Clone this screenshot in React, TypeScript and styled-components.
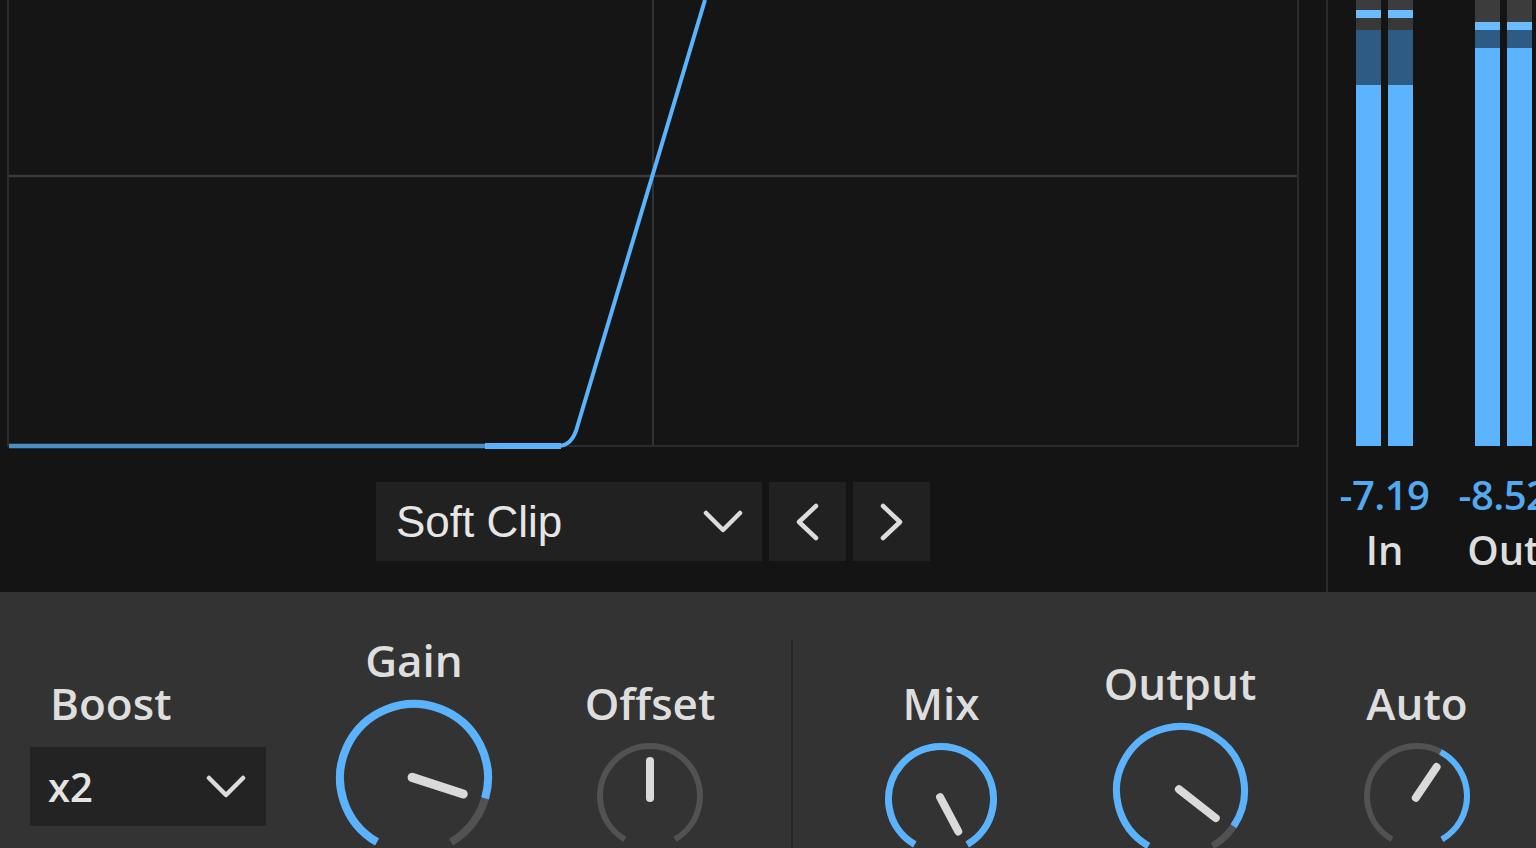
import React from "react";
import styled, { createGlobalStyle } from "styled-components";

const GlobalStyle = createGlobalStyle`
  html, body {
    margin: 0;
    padding: 0;
    background: #141414;
    overflow: hidden;
  }
  * { box-sizing: border-box; }
`;

const BLUE = "#5ab3fc";
const TRACK = "#525252";
const LABEL = "#dedede";

const Page = styled.div`
  width: 1536px;
  height: 848px;
  display: flex;
  flex-direction: column;
  overflow: hidden;
  font-family: "Open Sans", "Noto Sans", sans-serif;
  font-weight: 600;
`;

const TopSection = styled.div`
  height: 592px;
  flex: none;
  display: flex;
  background: #141414;
`;

const GraphArea = styled.div`
  width: 1326px;
  flex: none;
  padding-left: 7px;
  display: flex;
  flex-direction: column;
`;

const GraphBox = styled.div`
  width: 1292px;
  height: 447px;
  border: 2px solid #2c2c2c;
  border-top: none;
  background: #151515;
`;

const GraphSvg = styled.svg`
  display: block;
  overflow: visible;
`;

const PresetRow = styled.div`
  width: 1292px;
  margin-top: 35px;
  display: flex;
  justify-content: center;
  gap: 7px;
`;

const PresetSelect = styled.div`
  width: 386px;
  height: 79px;
  background: #212121;
  display: flex;
  align-items: center;
  justify-content: space-between;
  padding: 0 19px 0 20px;
  font-family: "Liberation Sans", Arial, sans-serif;
  font-weight: 400;
  font-size: 44px;
  color: #e6e6e6;
`;

const NavButton = styled.div`
  width: 77px;
  height: 79px;
  background: #212121;
  display: flex;
  align-items: center;
  justify-content: center;
`;

const MeterArea = styled.div`
  flex: 1;
  border-left: 2px solid #2b2b2b;
  padding-left: 28px;
  display: flex;
  gap: 62px;
`;

const MeterGroup = styled.div`
  width: 57px;
  flex: none;
  display: flex;
  flex-direction: column;
  align-items: center;
`;

const Bars = styled.div`
  height: 446px;
  display: flex;
  gap: 7px;
`;

const Bar = styled.div`
  width: 25px;
  display: flex;
  flex-direction: column;
`;

const Segment = styled.div<{ $h: number; $c: string }>`
  height: ${(p) => p.$h}px;
  flex: none;
  background: ${(p) => p.$c};
`;

const MeterValue = styled.div`
  margin-top: 25px;
  font-size: 40px;
  line-height: 48px;
  color: #52a9ee;
  white-space: nowrap;
  letter-spacing: -0.5px;
`;

const MeterName = styled.div`
  margin-top: 7px;
  font-size: 40px;
  line-height: 48px;
  color: ${LABEL};
  white-space: nowrap;
`;

const Controls = styled.div`
  flex: 1;
  background: #333333;
  display: flex;
  padding-left: 30px;
`;

const BoostCol = styled.div`
  width: 236px;
  flex: none;
  padding-top: 83px;
  display: flex;
  flex-direction: column;
`;

const BoostLabel = styled.div`
  padding-left: 20px;
  font-size: 44px;
  line-height: 56px;
  color: ${LABEL};
`;

const BoostSelect = styled.div`
  margin-top: 16px;
  height: 79px;
  background: #232323;
  display: flex;
  align-items: center;
  justify-content: space-between;
  padding: 0 20px 0 18px;
  font-size: 40px;
  color: #e4e4e4;
`;

const KnobCol = styled.div<{ $ml: number; $top: number }>`
  width: 170px;
  flex: none;
  margin-left: ${(p) => p.$ml}px;
  padding-top: ${(p) => p.$top}px;
  display: flex;
  flex-direction: column;
  align-items: center;
`;

const KnobLabel = styled.div`
  font-size: 44px;
  line-height: 56px;
  margin-bottom: 12px;
  color: ${LABEL};
  white-space: nowrap;
`;

const Divider = styled.div<{ $ml: number }>`
  width: 2px;
  flex: none;
  margin-left: ${(p) => p.$ml}px;
  margin-top: 48px;
  background: #262626;
`;

const Chevron = ({ dir }: { dir: "down" | "left" | "right" }) => {
  if (dir === "down") {
    return (
      <svg width="40" height="24" viewBox="0 0 40 24">
        <polyline points="3,3 20,20 37,3" fill="none" stroke="#dcdcdc" strokeWidth="4.5" strokeLinecap="round" strokeLinejoin="round" />
      </svg>
    );
  }
  const pts = dir === "left" ? "22,3 5,19 22,35" : "5,3 22,19 5,35";
  return (
    <svg width="27" height="38" viewBox="0 0 27 38">
      <polyline points={pts} fill="none" stroke="#dcdcdc" strokeWidth="4.5" strokeLinecap="round" strokeLinejoin="round" />
    </svg>
  );
};

const polar = (cx: number, cy: number, r: number, a: number) => {
  const rad = (a * Math.PI) / 180;
  return [cx + r * Math.sin(rad), cy - r * Math.cos(rad)];
};

const arcPath = (cx: number, cy: number, r: number, a0: number, a1: number) => {
  const [x0, y0] = polar(cx, cy, r, a0);
  const [x1, y1] = polar(cx, cy, r, a1);
  const large = a1 - a0 > 180 ? 1 : 0;
  return `M ${x0} ${y0} A ${r} ${r} 0 ${large} 1 ${x1} ${y1}`;
};

type KnobProps = {
  label: string;
  r: number;
  sw: number;
  ptr: number;
  pw: number;
  fill: [number, number] | null;
  ml: number;
  top: number;
};

const Knob = ({ label, r, sw, ptr, pw, fill, ml, top }: KnobProps) => {
  const size = 2 * r + sw;
  const c = size / 2;
  const [px0, py0] = polar(c, c, -2, ptr);
  const [px1, py1] = polar(c, c, r * 0.7, ptr);
  return (
    <KnobCol $ml={ml} $top={top}>
      <KnobLabel>{label}</KnobLabel>
      <svg width={size} height={size} viewBox={`0 0 ${size} ${size}`} style={{ overflow: "visible" }}>
        <path d={arcPath(c, c, r, -150, 150)} fill="none" stroke={TRACK} strokeWidth={sw} />
        {fill && <path d={arcPath(c, c, r, fill[0], fill[1])} fill="none" stroke={BLUE} strokeWidth={sw} />}
        <line x1={px0} y1={py0} x2={px1} y2={py1} stroke="#dadada" strokeWidth={pw} strokeLinecap="round" />
      </svg>
    </KnobCol>
  );
};

const inSegs = [
  { h: 10, c: "#3c3c3c" },
  { h: 8, c: "#6bbcff" },
  { h: 12, c: "#383838" },
  { h: 55, c: "#2e5b83" },
  { h: 361, c: "#5cb4ff" },
];
const outSegs = [
  { h: 22, c: "#3c3c3c" },
  { h: 8, c: "#6bbcff" },
  { h: 18, c: "#2e5b83" },
  { h: 398, c: "#5cb4ff" },
];

const Meter = ({ segs, value, name }: { segs: { h: number; c: string }[]; value: string; name: string }) => (
  <MeterGroup>
    <Bars>
      {[0, 1].map((i) => (
        <Bar key={i}>
          {segs.map((s, j) => (
            <Segment key={j} $h={s.h} $c={s.c} />
          ))}
        </Bar>
      ))}
    </Bars>
    <MeterValue>{value}</MeterValue>
    <MeterName>{name}</MeterName>
  </MeterGroup>
);

export default function App() {
  return (
    <>
      <GlobalStyle />
      <Page>
        <TopSection>
          <GraphArea>
            <GraphBox>
              <GraphSvg width="1288" height="445" viewBox="0 0 1288 445">
                <line x1="0" y1="176" x2="1288" y2="176" stroke="#3a3a3a" strokeWidth="2.5" />
                <line x1="644" y1="0" x2="644" y2="445" stroke="#323232" strokeWidth="2" />
                <line x1="0" y1="446" x2="478" y2="446" stroke="#4a8ec6" strokeWidth="4.5" />
                <line x1="476" y1="446" x2="552" y2="446" stroke={BLUE} strokeWidth="6" />
                <path
                  d="M 540 446 L 548 446 C 558 446 563 441 567 431 L 696 0"
                  fill="none"
                  stroke={BLUE}
                  strokeWidth="4"
                  strokeLinejoin="round"
                />
              </GraphSvg>
            </GraphBox>
            <PresetRow>
              <PresetSelect>
                <span>Soft Clip</span>
                <Chevron dir="down" />
              </PresetSelect>
              <NavButton>
                <Chevron dir="left" />
              </NavButton>
              <NavButton>
                <Chevron dir="right" />
              </NavButton>
            </PresetRow>
          </GraphArea>
          <MeterArea>
            <Meter segs={inSegs} value="-7.19" name="In" />
            <Meter segs={outSegs} value="-8.52" name="Out" />
          </MeterArea>
        </TopSection>
        <Controls>
          <BoostCol>
            <BoostLabel>Boost</BoostLabel>
            <BoostSelect>
              <span>x2</span>
              <Chevron dir="down" />
            </BoostSelect>
          </BoostCol>
          <Knob label="Gain" r={74} sw={8} ptr={108} pw={9} fill={[-150, 106]} ml={63} top={40} />
          <Knob label="Offset" r={50} sw={6} ptr={0} pw={8} fill={null} ml={66} top={83} />
          <Divider $ml={56} />
          <Knob label="Mix" r={52.5} sw={7} ptr={152} pw={8} fill={[-150, 150]} ml={63} top={83} />
          <Knob label="Output" r={64} sw={7} ptr={128} pw={8} fill={[-150, 124]} ml={69} top={63} />
          <Knob label="Auto" r={50} sw={6} ptr={34} pw={8} fill={[28, 150]} ml={67} top={83} />
        </Controls>
      </Page>
    </>
  );
}
